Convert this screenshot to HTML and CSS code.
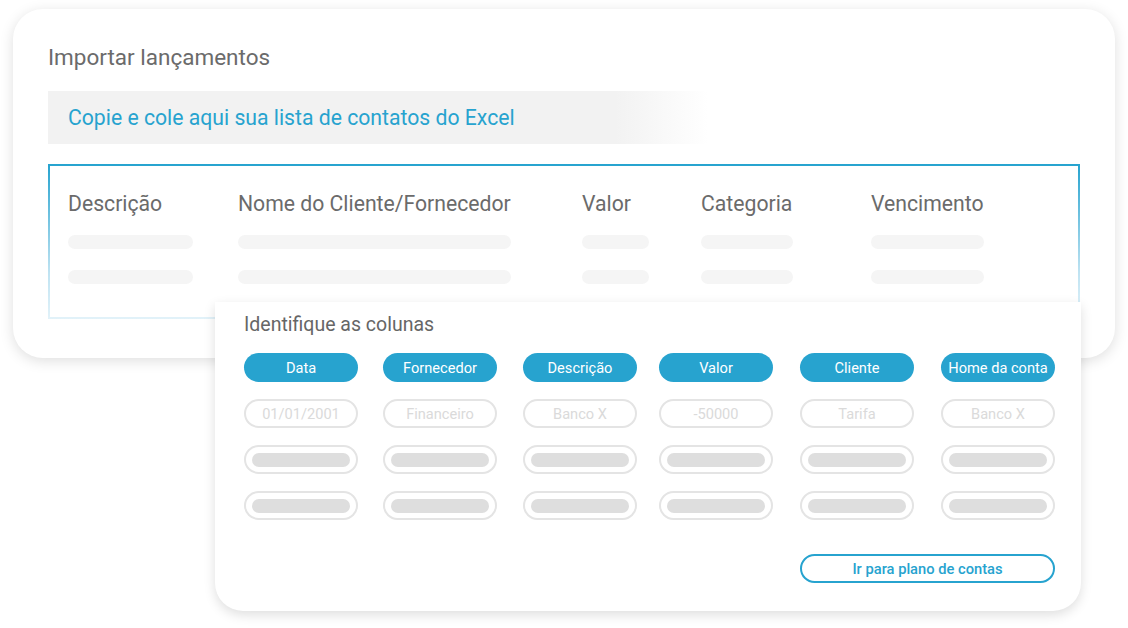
FILE: index.html
```html
<!DOCTYPE html>
<html>
<head>
  <title>Importar lançamentos</title>
  <meta name="viewport" content="width=device-width, initial-scale=1">
  <link rel="stylesheet" href="styles.css">
</head>
<body>
  <div class="stage">
    <section class="import-card">
      <h1 class="import-title">Importar lançamentos</h1>
      <div class="paste-banner">Copie e cole aqui sua lista de contatos do Excel</div>
      <div class="paste-frame">
        <div class="paste-area">
          <div class="col col-desc"><span class="col-head">Descrição</span><i class="sk"></i><i class="sk"></i></div>
          <div class="col col-name"><span class="col-head">Nome do Cliente/Fornecedor</span><i class="sk"></i><i class="sk"></i></div>
          <div class="col col-val"><span class="col-head">Valor</span><i class="sk"></i><i class="sk"></i></div>
          <div class="col col-cat"><span class="col-head">Categoria</span><i class="sk"></i><i class="sk"></i></div>
          <div class="col col-due"><span class="col-head">Vencimento</span><i class="sk"></i><i class="sk"></i></div>
        </div>
      </div>
    </section>

    <section class="map-card">
      <h2 class="map-title">Identifique as colunas</h2>
      <div class="pill-grid">
        <span class="pill on">Data</span>
        <span class="pill on">Fornecedor</span>
        <span class="pill on">Descrição</span>
        <span class="pill on">Valor</span>
        <span class="pill on">Cliente</span>
        <span class="pill on">Home da conta</span>

        <span class="pill ghost">01/01/2001</span>
        <span class="pill ghost">Financeiro</span>
        <span class="pill ghost">Banco X</span>
        <span class="pill ghost">-50000</span>
        <span class="pill ghost">Tarifa</span>
        <span class="pill ghost">Banco X</span>

        <span class="pill blank"><i></i></span>
        <span class="pill blank"><i></i></span>
        <span class="pill blank"><i></i></span>
        <span class="pill blank"><i></i></span>
        <span class="pill blank"><i></i></span>
        <span class="pill blank"><i></i></span>

        <span class="pill blank"><i></i></span>
        <span class="pill blank"><i></i></span>
        <span class="pill blank"><i></i></span>
        <span class="pill blank"><i></i></span>
        <span class="pill blank"><i></i></span>
        <span class="pill blank"><i></i></span>
      </div>
      <div class="map-actions">
        <button class="btn-outline">Ir para plano de contas</button>
      </div>
    </section>
  </div>
</body>
</html>
```

FILE: styles.css
```css
body { margin:0; background:#fff; font-family:Roboto,'Liberation Sans',sans-serif; color:#666; }
.stage { width:1128px; height:628px; overflow:hidden; padding-top:9px; box-sizing:border-box; }

.import-card { width:1102px; height:349px; margin-left:13px; box-sizing:border-box;
               padding:34px 35px 0 35px; background:#fff; border-radius:30px;
               box-shadow:0 3px 14px rgba(0,0,0,0.13); }
.import-title { margin:0; font-size:22.5px; line-height:28px; font-weight:400; color:#6b6b6b; }
.paste-banner { margin-top:20px; width:660px; height:53px; box-sizing:border-box; padding-left:20px;
                display:flex; align-items:center; font-size:21.2px; color:#27a3cf;
                background:linear-gradient(to right,#f2f2f2 0%,#f2f2f2 86%,#fff 100%); }

.paste-frame { margin-top:20px; padding:2px; height:155px; box-sizing:border-box;
               background:linear-gradient(to bottom,#26a3cf 0%,#bfe3f2 70%,#e2f2f9 100%); }
.paste-area { height:100%; background:#fff; box-sizing:border-box; padding:26px 0 0 18px;
              display:grid; grid-template-columns:170px 344px 119px 170px 1fr; }
.col { display:flex; flex-direction:column; align-items:flex-start; }
.col-head { font-size:21.2px; line-height:24px; color:#6b6b6b; }
.sk { display:block; height:14px; border-radius:7px; background:#f5f5f5; margin-top:19px; }
.sk + .sk { margin-top:21px; }
.col-desc .sk { width:125px; }
.col-name .sk { width:273px; }
.col-val .sk { width:67px; }
.col-cat .sk { width:92px; }
.col-due .sk { width:113px; }

.map-card { position:relative; z-index:1; margin:-56px 0 0 215px; width:866px; height:309px;
            box-sizing:border-box; padding:12px 26px 0 29px; background:#fff;
            border-radius:0 0 28px 28px; box-shadow:0 4px 12px rgba(0,0,0,0.13); }
.map-title { margin:0; font-size:19.5px; line-height:22px; font-weight:400; color:#666; }
.pill-grid { margin-top:17px; width:811px; display:grid;
             grid-template-columns:139px 140px 136px 141px 141px 114px; row-gap:17px; }
.pill { width:114px; height:29px; box-sizing:border-box; border-radius:15px; display:flex; align-items:center;
        justify-content:center; font-size:14.6px; }
.pill.on { background:#27a3cf; color:#fff; }
.pill.ghost { border:2px solid #e4e4e4; color:#dadada; }
.pill.blank { border:2px solid #e4e4e4; padding:0 6px; }
.pill.blank i { display:block; width:100%; height:14px; border-radius:7px; background:#dedede; }

.map-actions { display:flex; justify-content:flex-end; margin-top:34px; }
.btn-outline { width:255px; height:29px; border:2px solid #27a3cf; border-radius:15px; background:#fff;
               color:#27a3cf; font-family:Roboto,'Liberation Sans',sans-serif; font-size:14.7px;
               font-weight:500; cursor:pointer; }
```
